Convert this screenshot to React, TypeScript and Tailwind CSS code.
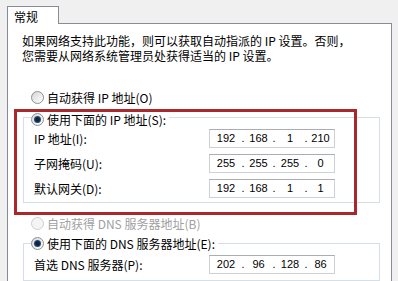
import clsx from "clsx";

const CJK = "font-['Noto_Sans_CJK_SC','Noto_Sans',sans-serif]";

function Radio({ checked, disabled }: { checked?: boolean; disabled?: boolean }) {
  return (
    <span
      className={clsx(
        "flex h-[13px] w-[13px] shrink-0 items-center justify-center rounded-full border",
        disabled
          ? "border-[#cfcfcf] bg-[#f4f4f4]"
          : "border-[#8e8f8f] bg-[linear-gradient(135deg,#d6d6d6,#ffffff)]"
      )}
    >
      {checked && (
        <span className="h-[7px] w-[7px] rounded-full bg-[radial-gradient(circle,#0d2440_35%,#4d7fbf_100%)]" />
      )}
    </span>
  );
}

function RadioRow({
  label,
  checked,
  disabled,
}: {
  label: string;
  checked?: boolean;
  disabled?: boolean;
}) {
  return (
    <div className="flex h-[15px] w-fit items-center gap-[3px] bg-white pr-[3px]">
      <Radio checked={checked} disabled={disabled} />
      <span className={clsx("leading-[15px]", disabled ? "text-[#a0a0a0]" : "text-black")}>
        {label}
      </span>
    </div>
  );
}

const widths = ["w-[30px]", "w-[27px]", "w-[28px]", "w-[25px]"];

function IpBox({ parts }: { parts: string[] }) {
  return (
    <div className="flex h-[19px] w-[126px] items-center border border-[#cdd0d4] border-t-[#abadb3] bg-white pl-[1px] font-['Liberation_Sans',Arial,sans-serif] text-[11px] text-black">
      {parts.map((p, i) => (
        <div key={i} className="flex items-center">
          <span className={clsx("text-center", widths[i])}>{p}</span>
          {i < 3 && <span className="w-[4px] text-center">.</span>}
        </div>
      ))}
    </div>
  );
}

function FieldRow({ label, parts }: { label: string; parts: string[] }) {
  return (
    <div className="flex h-[19px] items-center">
      <span className="w-[185px] pl-[10px] leading-[15px]">{label}</span>
      <IpBox parts={parts} />
    </div>
  );
}

export default function App() {
  return (
    <div
      className={clsx(
        "flex h-[281px] w-[398px] flex-col overflow-hidden bg-[#f0f0f0] pl-[7px] pt-[6px] text-[12px] text-black",
        CJK
      )}
    >
      <div className="relative z-10 -mb-px flex h-[22px] w-[52px] items-start border border-b-0 border-[#898c95] bg-white pl-[6px] pt-[2px] leading-[15px]">
        常规
      </div>
      <div className="relative w-[385px] flex-1 border border-[#898c95] bg-white">
        <p className="ml-[14px] mt-[9px] leading-[15px]">
          如果网络支持此功能，则可以获取自动指派的 IP 设置。否则，
          <br />
          您需要从网络系统管理员处获得适当的 IP 设置。
        </p>

        <div className="ml-[23px] mt-[27px]">
          <RadioRow label="自动获得 IP 地址(O)" />
        </div>

        <div className="ml-[15px] mt-[12px] w-[357px] border border-[#d5dfe5] pb-[4px]">
          <div className="-mt-[6px] ml-[7px]">
            <RadioRow label="使用下面的 IP 地址(S):" checked />
          </div>
          <div className="mt-[2px] flex flex-col gap-[6px]">
            <FieldRow label="IP 地址(I):" parts={["192", "168", "1", "210"]} />
            <FieldRow label="子网掩码(U):" parts={["255", "255", "255", "0"]} />
            <FieldRow label="默认网关(D):" parts={["192", "168", "1", "1"]} />
          </div>
        </div>

        <div className="ml-[23px] mt-[13px]">
          <RadioRow label="自动获得 DNS 服务器地址(B)" disabled />
        </div>

        <div className="ml-[15px] mt-[12px] w-[357px] border border-[#d5dfe5] pb-[6px]">
          <div className="-mt-[8px] ml-[7px]">
            <RadioRow label="使用下面的 DNS 服务器地址(E):" checked />
          </div>
          <div className="mt-[4px]">
            <FieldRow label="首选 DNS 服务器(P):" parts={["202", "96", "128", "86"]} />
          </div>
        </div>

        {/* red highlight around the IP block */}
        <div className="pointer-events-none absolute left-[6px] top-[85px] h-[106px] w-[343px] border-[3px] border-[#a8282b]" />
      </div>
    </div>
  );
}
